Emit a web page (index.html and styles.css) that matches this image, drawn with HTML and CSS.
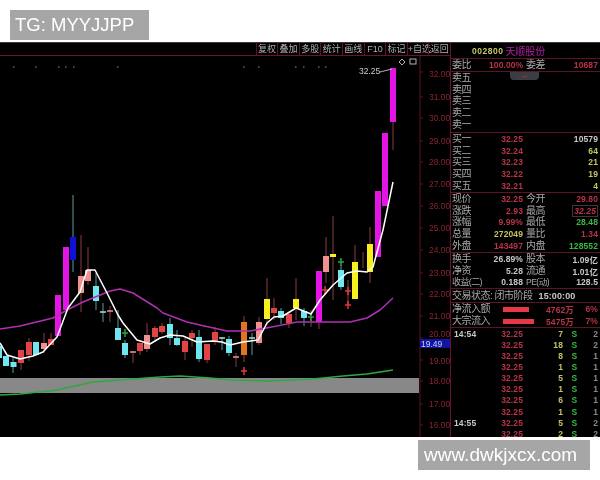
FILE: index.html
```html
<!DOCTYPE html>
<html lang="zh">
<head>
<meta charset="utf-8">
<title>002800</title>
<link rel="stylesheet" href="styles.css">
</head>
<body>
<header class="top"><div class="tag tag-tg">TG: MYYJJPP</div></header>
<main class="term">
  <section class="chart">
    <nav class="tools">
      <span>复权</span><span>叠加</span><span>多股</span><span>统计</span><span>画线</span><span>F10</span><span>标记</span><span>+自选</span><span>返回</span>
    </nav>
    <svg class="plot" viewBox="0 56 450 381" width="450" height="381">
      <rect class="band" x="0" y="378" width="419" height="15"/>
      <path class="axis" d="M420 56V437M420 72h3M420 97h3M420 118h3M420 141h3M420 162h3M420 184h3M420 206h3M420 228h3M420 250h3M420 273h3M420 294h3M420 316h3M420 338h3M420 360h3M420 381h3M420 404h3M420 425h3"/>
      <g class="ticks">
        <text x="429" y="77">32.00</text><text x="429" y="100">31.00</text><text x="429" y="121">30.00</text><text x="429" y="144">29.00</text><text x="429" y="165">28.00</text><text x="429" y="187">27.00</text><text x="429" y="209">26.00</text><text x="429" y="231">25.00</text><text x="429" y="253">24.00</text><text x="429" y="276">23.00</text><text x="429" y="297">22.00</text><text x="429" y="319">21.00</text><text x="429" y="337">20.00</text><text x="429" y="364">19.00</text><text x="429" y="384">18.00</text><text x="429" y="407">17.00</text><text x="429" y="428">16.00</text>
      </g>
      <path class="dots" d="M13 67h1.500M35 67h1.500M58 67h1.500M65 67h1.500M73 67h1.500M117 67h1.500M243 67h1.500M258 67h1.500M295 67h1.500M303 67h1.500M318 67h1.500M325 67h1.500"/>

      <path class="wick w-red" d="M21 350V370M29 338V361M44 333V353M51 333V345M81 235V312M88 247V285M110 306V322M133 351V363M140 343V355M147 323V352M155 326V340M162 323V334M185 338V360M192 330V347M207 344V363M215 327V345M236 353V367M244 316V362M259 317V345M267 278V325M274 298V320M289 312V328M296 278V320M311 310V327M319 322V329M326 237V283M333 216V300M348 280V305M355 245V265M363 252V268M370 227V283M393 122V150"/>
      <path class="wick w-teal" d="M13 358V373M73 195V272M96 273V310M103 303V322M118 310V340M125 340V358M170 318V345M177 330V346M199 330V362M222 337V350M229 336V356M252 333V355M281 308V324M304 308V326M341 265V290"/>

      <path class="body b-cyan" d="M-1 346V358M6 356V366M13.500 362V367M36 342V355M96 286V301M118 328V340M125 343V355M170 324V338M177 338V345M199 337V359M229 339V353M281 311V318M304 311V318M341 270V287"/>
      <path class="body b-red" d="M21 350V363M29 342V355M51 339V345M140 343V351M155 328V337M162 326V332M185 341V352M192 333V338M207 344V360M215 332V342M274 308V313M289 314V323"/>
      <path class="body b-pink" d="M44 343V349M81 276V293M88 270V281M147 335V349M259 322V343M326 256V272"/>
      <path class="body b-magenta" d="M58 295V336M66 247V310M319 271V322M378 191V257M385 133V206M393 68V122"/>
      <path class="body b-blue" d="M73 237V260"/>
      <path class="body b-orange" d="M244 322V355"/>
      <path class="body b-yellow" d="M267 299V319M296 299V308M333 254V257M355 262V299M370 244V272"/>
      <path class="doji d-cyan" d="M100 312h6M219 338h6M249 338h6"/>
      <path class="doji d-pink" d="M107 311h6M130 352h6M233 357h6"/>
      <path class="mark m-green" d="M125 329v8M122 333h6M341 258v8M338 262h6M311 313v8M308 317h6"/>
      <path class="mark m-red" d="M244 367v8M241 371h6M325 286v8M322 290h6M348 287v8M345 291h6M348 301v8M345 305h6"/>

      <path class="line l-green" d="M0 395L20 394L57 390L93 382L133 379L160 377L180 376L210 378L233 380L267 381L313 379L343 376L367 374L393 370"/>
      <path class="line l-purple" d="M0 329L20 326L53 318L67 310L83 302L110 291L120 289L133 293L157 308L163 313L187 322L200 325L227 331L250 331L277 326L297 322L350 322L367 318L380 310L393 298"/>
      <path class="line l-white" d="M0 343L7 355L20 359L33 356L43 352L57 337L68 308L80 292L87 270L95 270L107 293L118 315L123 323L137 340L150 344L160 338L170 335L183 336L197 342L213 341L222 342L230 345L243 342L258 340L267 323L274 317L283 316L296 308L311 314L320 300L333 285L347 273L357 271L367 272L373 267L383 230L393 182"/>

      <text class="price" x="359" y="74">32.25</text>
      <path class="pointer" d="M380 72L392 69"/>
      <path class="pointer" d="M402 59l3 3l-3 3l-3-3z"/>
      <rect class="pointer" x="410" y="59" width="6" height="5"/>
      <rect class="now" x="420" y="339" width="31" height="9"/>
      <text class="now-text" x="421" y="347">19.49</text>
    </svg>
  </section>

  <aside class="side">
    <div class="s s-title"><b class="code">002800</b><b class="name">天顺股份</b></div>
    <div class="s s-ratio row">
      <span class="l">委比</span><span class="n red">100.00%</span><span class="l l2">委差</span><span class="n red">10687</span>
    </div>
    <div class="s s-sell">
      <div class="row"><span class="l">卖五</span></div>
      <div class="row"><span class="l">卖四</span></div>
      <div class="row"><span class="l">卖三</span></div>
      <div class="row"><span class="l">卖二</span></div>
      <div class="row"><span class="l">卖一</span></div>
      <div class="fold"><i></i></div>
    </div>
    <div class="s s-buy">
      <div class="row"><span class="l">买一</span><span class="n red">32.25</span><span></span><span class="n pale">10579</span></div>
      <div class="row"><span class="l">买二</span><span class="n red">32.24</span><span></span><span class="n yel">64</span></div>
      <div class="row"><span class="l">买三</span><span class="n red">32.23</span><span></span><span class="n yel">21</span></div>
      <div class="row"><span class="l">买四</span><span class="n red">32.22</span><span></span><span class="n yel">19</span></div>
      <div class="row"><span class="l">买五</span><span class="n red">32.21</span><span></span><span class="n yel">4</span></div>
    </div>
    <div class="s s-stats">
      <div class="row"><span class="l">现价</span><span class="n red">32.25</span><span class="l l2">今开</span><span class="n red">29.80</span></div>
      <div class="row"><span class="l">涨跌</span><span class="n red">2.93</span><span class="l l2">最高</span><span class="n red"><em class="boxed">32.25</em></span></div>
      <div class="row"><span class="l">涨幅</span><span class="n red">9.99%</span><span class="l l2">最低</span><span class="n grn">28.48</span></div>
      <div class="row"><span class="l">总量</span><span class="n yel">272049</span><span class="l l2">量比</span><span class="n red">1.34</span></div>
      <div class="row"><span class="l">外盘</span><span class="n red">143497</span><span class="l l2">内盘</span><span class="n grn">128552</span></div>
    </div>
    <div class="s s-fund">
      <div class="row"><span class="l">换手</span><span class="n pale">26.89%</span><span class="l l2">股本</span><span class="n pale">1.09亿</span></div>
      <div class="row"><span class="l">净资</span><span class="n pale">5.28</span><span class="l l2">流通</span><span class="n pale">1.01亿</span></div>
      <div class="row"><span class="l l-tight">收益(二)</span><span class="n pale">0.188</span><span class="l l2 pe">PE(动)</span><span class="n pale">128.5</span></div>
    </div>
    <div class="s s-state"><span class="l">交易状态: 闭市阶段</span><b class="n pale clock">15:00:00</b></div>
    <div class="s s-flow">
      <div class="flow"><span class="l">净流入额</span><span class="bar bar-a"></span><span class="n red amt">4762万</span><span class="n red">6%</span></div>
      <div class="flow"><span class="l">大宗流入</span><span class="bar bar-b"></span><span class="n red amt">5475万</span><span class="n red">7%</span></div>
    </div>
    <div class="s-trades">
      <div class="trade"><span class="n t">14:54</span><span class="n red">32.25</span><span class="n yel">7</span><span class="n grn c">S</span><span class="n dim">2</span></div>
      <div class="trade"><span></span><span class="n red">32.25</span><span class="n yel">18</span><span class="n grn c">S</span><span class="n dim">2</span></div>
      <div class="trade"><span></span><span class="n red">32.25</span><span class="n yel">8</span><span class="n grn c">S</span><span class="n dim">1</span></div>
      <div class="trade"><span></span><span class="n red">32.25</span><span class="n yel">1</span><span class="n grn c">S</span><span class="n dim">1</span></div>
      <div class="trade"><span></span><span class="n red">32.25</span><span class="n yel">5</span><span class="n grn c">S</span><span class="n dim">1</span></div>
      <div class="trade"><span></span><span class="n red">32.25</span><span class="n yel">1</span><span class="n grn c">S</span><span class="n dim">1</span></div>
      <div class="trade"><span></span><span class="n red">32.25</span><span class="n yel">6</span><span class="n grn c">S</span><span class="n dim">1</span></div>
      <div class="trade"><span></span><span class="n red">32.25</span><span class="n yel">1</span><span class="n grn c">S</span><span class="n dim">1</span></div>
      <div class="trade"><span class="n t">14:55</span><span class="n red">32.25</span><span class="n yel">5</span><span class="n grn c">S</span><span class="n dim">2</span></div>
      <div class="trade"><span></span><span class="n red">32.25</span><span class="n yel">2</span><span class="n grn c">S</span><span class="n dim">2</span></div>
    </div>
  </aside>
</main>
<footer class="bottom"><div class="tag tag-url">www.dwkjxcx.com</div></footer>
</body>
</html>
```

FILE: styles.css
```css
* { box-sizing: border-box; }
html, body { margin: 0; height: 480px; overflow: hidden; background: #fff; }
body { font-family: "Liberation Sans", "Noto Sans CJK SC", sans-serif; }

.top { height: 42px; padding: 10px 0 0 10px; }
.tag { background: #a6a6a6; color: #fff; display: flex; align-items: center; filter: blur(.3px); }
.tag-tg { width: 139px; height: 30px; padding-left: 5px; font-size: 18.500px; }
.bottom { display: flex; justify-content: flex-end; padding: 3px 10px 0 0; }
.tag-url { width: 172px; height: 30px; padding-left: 6px; font-size: 19px; }

.term { display: flex; height: 395px; background: #000; border-top: 1px solid #3a3a3a; overflow: hidden; }

.chart { width: 450px; flex: none; display: flex; flex-direction: column; }
.tools { height: 13px; flex: none; display: flex; justify-content: flex-end; border-bottom: 1px solid #6a1428; }
.tools span { width: 21.600px; flex: none; border-left: 1px solid #5a1424; text-align: center; color: #b0b0b0; font-size: 9px; line-height: 12px; white-space: nowrap; filter: blur(.3px); }
.plot { display: block; flex: none; filter: blur(.35px); }

.band { fill: #888; }
.axis { stroke: #5a1420; stroke-width: 1; fill: none; }
.ticks text { fill: #8c2430; font-size: 8.500px; }
.dots { stroke: #7a5090; stroke-width: 1.500; fill: none; }
.wick { fill: none; stroke-width: 1; }
.w-red { stroke: #8a3c40; }
.w-teal { stroke: #5c9c9c; }
.body { fill: none; stroke-width: 6; }
.b-cyan { stroke: #70e6f0; }
.b-red { stroke: #e04444; }
.b-pink { stroke: #f09090; }
.b-magenta { stroke: #e414e4; }
.b-blue { stroke: #1010d8; }
.b-orange { stroke: #e07420; }
.b-yellow { stroke: #f6f020; }
.doji { fill: none; stroke-width: 1.500; }
.d-cyan { stroke: #a8e0e0; }
.d-pink { stroke: #f09090; }
.mark { fill: none; stroke-width: 1.500; }
.m-green { stroke: #30a040; }
.m-red { stroke: #e03838; }
.line { fill: none; stroke-linejoin: round; }
.l-white { stroke: #fff; stroke-width: 1.500; }
.l-purple { stroke: #b030b0; stroke-width: 1.500; }
.l-green { stroke: #30a840; stroke-width: 1.500; }
.price { fill: #d0d0d0; font-size: 8.500px; }
.pointer { fill: none; stroke: #b0b0b0; stroke-width: 1; }
.now { fill: #1414a0; }
.now-text { fill: #c8d0ff; font-size: 8.500px; }

.side { width: 150px; flex: none; border-left: 1px solid #6a1428; position: relative; color: #a8a8a8; filter: blur(.25px); }
.s { border-bottom: 1px solid #5a1424; }
.l { font-size: 10px; letter-spacing: -.5px; white-space: nowrap; line-height: 1; }
.l-tight { font-size: 9px; letter-spacing: -.6px; }
.n { font-size: 8.500px; font-weight: 700; letter-spacing: .1px; text-align: right; white-space: nowrap; font-style: normal; }
.red { color: #b83448; }
.yel { color: #c4c464; }
.grn { color: #38b848; }
.pale { color: #c8c8c8; }
.dim { color: #888; }

.row { display: grid; grid-template-columns: 37px 34px 22px 1fr; align-items: center; height: 11.800px; padding: 0 2px 0 1px; }
.l2 { padding-left: 3px; }
.pe { font-size: 8.500px; }

.s-title { height: 16px; display: flex; padding-left: 21px; align-items: center; gap: 2px; }
.code { color: #c8c864; font-size: 8.500px; letter-spacing: .5px; }
.name { color: #b020a0; font-size: 10px; font-weight: 400; }
.s-ratio { height: 13px; }
.s-sell { height: 61px; position: relative; }
.fold { position: absolute; left: 59px; top: 0; width: 29px; height: 8px; background: #3c3c44; border-radius: 0 0 4px 4px; display: flex; justify-content: center; align-items: center; }
.fold i { width: 5px; height: 1px; background: #a03040; }
.s-buy { height: 60px; }
.s-stats { height: 60px; }
.s-fund { height: 36px; }
.s-state { height: 14px; padding: 0 0 0 1px; display: flex; align-items: center; gap: 6px; }
.clock { font-size: 9px; }
.s-flow { height: 25px; }
.boxed { border: 1px solid #503038; padding: 0 1px; }

.flow { display: grid; grid-template-columns: 51px 43px 27px 1fr; align-items: center; height: 12px; padding: 0 2px 0 1px; }
.bar { height: 5px; background: #e83848; display: block; }
.bar-a { width: 26px; }
.bar-b { width: 31px; }
.amt { text-align: left; }

.s-trades { height: 110px; overflow: hidden; }
.trade { display: grid; grid-template-columns: 37px 34px 40px 1fr 12px; align-items: center; height: 11.150px; padding: 0 2px 0 1px; }
.t { color: #c8c8c8; text-align: left; padding-left: 2px; }
.c { text-align: center; }
```
